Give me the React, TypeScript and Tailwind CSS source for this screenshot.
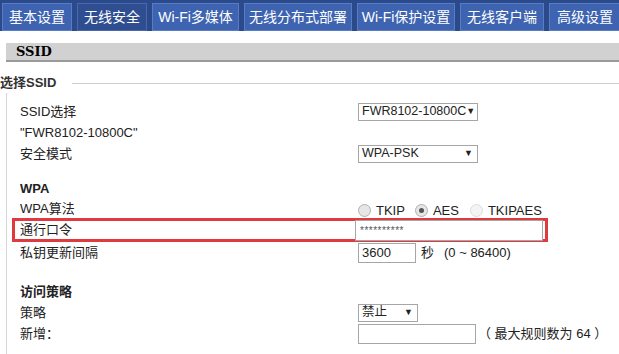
const tabs = [
  { label: '基本设置', w: 'w-[70px]' },
  { label: '无线安全', w: 'w-[70px]', active: true },
  { label: 'Wi-Fi多媒体', w: 'w-[87px]' },
  { label: '无线分布式部署', w: 'w-[108px]' },
  { label: 'Wi-Fi保护设置', w: 'w-[98px]' },
  { label: '无线客户端', w: 'w-[84px]' },
  { label: '高级设置', w: 'w-[72px]' },
]

function Select({ value, w }: { value: string; w: string }) {
  return (
    <div className={`${w} h-[18px] border border-[#a6a6a6] bg-white flex items-center justify-between pl-[3px] pr-[4px] text-[12.5px] leading-none text-[#222] whitespace-nowrap`}>
      <span>{value}</span>
      <span className="text-[9px]">▼</span>
    </div>
  )
}

function Radio({ checked, disabled }: { checked?: boolean; disabled?: boolean }) {
  return (
    <span
      className={`w-[13px] h-[13px] rounded-full border flex items-center justify-center ${
        disabled ? 'border-[#dcdcdc] bg-[#f4f4f4]' : 'border-[#b0b0b0] bg-[#e6e6e6]'
      }`}
    >
      {checked && <span className="w-[5px] h-[5px] rounded-full bg-[#555]" />}
    </span>
  )
}

function Row({ label, bold, children, h = 'h-[21px]' }: { label: string; bold?: boolean; children?: React.ReactNode; h?: string }) {
  return (
    <div className={`flex items-center ${h}`}>
      <div className={`w-[351px] pl-[13px] ${bold ? 'font-bold' : ''}`}>{label}</div>
      <div className="flex items-center whitespace-nowrap">{children}</div>
    </div>
  )
}

export default function App() {
  return (
    <div className="w-[619px] h-[354px] bg-white overflow-hidden text-[13px] text-[#222]" style={{ fontFamily: '"Liberation Sans", "Noto Sans CJK SC", sans-serif' }}>
      {/* tab bar */}
      <div className="h-[31px] bg-[#2b4a8c] flex items-end gap-[5px] pl-[2px]">
        {tabs.map((t) => (
          <div
            key={t.label}
            className={`${t.w} h-[28px] shrink-0 flex items-center justify-center text-white text-[14px] border ${
              t.active ? 'bg-[#2e4e91] border-[#4a68aa]' : 'bg-[#3d63b1] border-[#5a7cc2]'
            }`}
          >
            {t.label}
          </div>
        ))}
      </div>

      {/* section header */}
      <div className="mt-[12px] ml-[6px] h-[19px] bg-[#d1d1d1] border-b-2 border-[#9a9a9a] flex items-center pl-[10px]">
        <span className="font-bold text-[13px] text-black" style={{ fontFamily: '"DejaVu Serif", serif' }}>SSID</span>
      </div>

      {/* fieldset */}
      <div className="mt-[11px] flex items-center h-[20px]">
        <span className="font-bold w-[72px] text-[#333]">选择SSID</span>
        <div className="flex-1 h-px bg-[#cfcfcf]" />
      </div>
      <div className="ml-[6px] border-l border-[#d6d6d6] pt-[8px] h-[300px]">
        <Row label="SSID选择">
          <Select value="FWR8102-10800C" w="w-[120px]" />
        </Row>
        <Row label={'"FWR8102-10800C"'} />
        <Row label="安全模式">
          <Select value="WPA-PSK" w="w-[120px]" />
        </Row>
        <div className="h-[14px]" />
        <Row label="WPA" bold />
        <Row label="WPA算法" h="h-[19px]">
          <div className="flex items-center gap-[5px] pt-[4px] text-[13px]">
            <Radio />
            <span className="mr-[5px]">TKIP</span>
            <Radio checked />
            <span className="mr-[6px]">AES</span>
            <Radio disabled />
            <span>TKIPAES</span>
          </div>
        </Row>
        <div className="ml-[5px] w-[536px] h-[24px] border-[3px] border-[#e03a3e] flex items-center">
          <div className="w-[340px] pl-[5px]">通行口令</div>
          <div className="w-[188px] h-[21px] border border-[#a6a6a6] bg-white flex items-center pl-[4px] text-[10px] text-[#555] tracking-[0.5px]">
            **********
          </div>
        </div>
        <Row label="私钥更新间隔">
          <div className="w-[58px] h-[20px] border border-[#a6a6a6] flex items-center pl-[3px]">3600</div>
          <span className="ml-[5px]">秒</span>
          <span className="ml-[10px]">(0 ~ 86400)</span>
        </Row>
        <div className="h-[18px]" />
        <Row label="访问策略" bold />
        <Row label="策略">
          <Select value="禁止" w="w-[60px]" />
        </Row>
        <Row label="新增：">
          <div className="w-[118px] h-[20px] border border-[#a6a6a6]" />
          <span className="ml-[2px]">（ 最大规则数为 64 ）</span>
        </Row>
      </div>
    </div>
  )
}
